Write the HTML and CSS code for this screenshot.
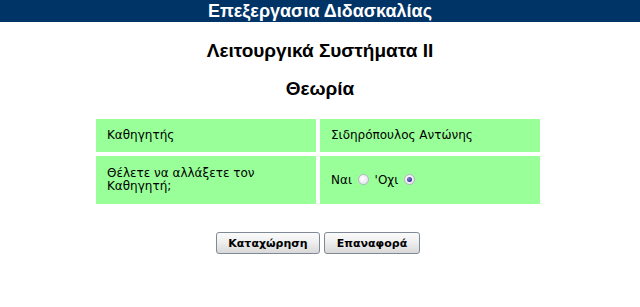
FILE: index.html
```html
<!DOCTYPE html>
<html>
<head>
<meta charset="utf-8">
<link rel="stylesheet" href="styles.css">
</head>
<body>
<div class="topbar">Επεξεργασια Διδασκαλίας</div>
<h1 class="title">Λειτουργικά Συστήματα II</h1>
<h2 class="subtitle">Θεωρία</h2>
<div class="tablewrap">
<table class="form">
<tr>
<td>Καθηγητής</td>
<td>Σιδηρόπουλος Αντώνης</td>
</tr>
<tr class="tall">
<td>Θέλετε να αλλάξετε τον Καθηγητή;</td>
<td>Ναι <span class="radio"></span> 'Οχι <span class="radio checked"></span></td>
</tr>
</table>
</div>
<div class="buttons">
<button class="btn" type="button">Καταχώρηση</button>
<button class="btn" type="button">Επαναφορά</button>
</div>
</body>
</html>
```
FILE: styles.css
```css
html, body {
  margin: 0;
  padding: 0;
  background: #ffffff;
}
body {
  font-family: "Liberation Sans", Arial, sans-serif;
  color: #000;
}
.topbar {
  background: #003366;
  color: #ffffff;
  font-weight: bold;
  font-size: 18px;
  height: 22px;
  line-height: 22px;
  text-align: center;
}
.title, .subtitle {
  margin: 0;
  text-align: center;
  font-size: 19px;
  line-height: 22px;
  font-weight: bold;
}
.title {
  margin-top: 18px;
}
.subtitle {
  margin-top: 16px;
}
.tablewrap {
  display: flex;
  justify-content: center;
  padding-right: 4px;
  margin-top: 15px;
}
.form {
  border-collapse: separate;
  border-spacing: 4px;
}
.form td {
  background: #99ff99;
  width: 200px;
  padding: 10px 9px 10px 11px;
  font-family: "DejaVu Sans", Verdana, sans-serif;
  font-size: 12px;
  line-height: 13px;
  vertical-align: middle;
  color: #000;
}
.tall td {
  height: 28px;
}
.radio {
  display: inline-block;
  width: 9px;
  height: 9px;
  border: 1px solid #b4b4c6;
  border-radius: 50%;
  background: radial-gradient(circle at 40% 40%, #ffffff, #e2daee);
  vertical-align: -1px;
  margin: 0 2px;
  position: relative;
}
.radio.checked::after {
  content: "";
  position: absolute;
  left: 2px;
  top: 2px;
  width: 5px;
  height: 5px;
  border-radius: 50%;
  background: radial-gradient(circle at 35% 35%, #7c7cd8, #181870);
}
.buttons {
  display: flex;
  justify-content: center;
  gap: 4px;
  padding-right: 4px;
  margin-top: 24px;
}
.btn {
  height: 22px;
  padding: 0 8px;
  border: 1px solid #7f8a96;
  border-radius: 3px;
  background: linear-gradient(#fbfbfb 0%, #efefef 45%, #d8d8d8 100%);
  font-family: "DejaVu Sans", Tahoma, sans-serif;
  font-weight: bold;
  font-size: 11px;
  color: #000;
}
.btn:first-child {
  width: 104px;
}
.btn:last-child {
  width: 96px;
}
```
